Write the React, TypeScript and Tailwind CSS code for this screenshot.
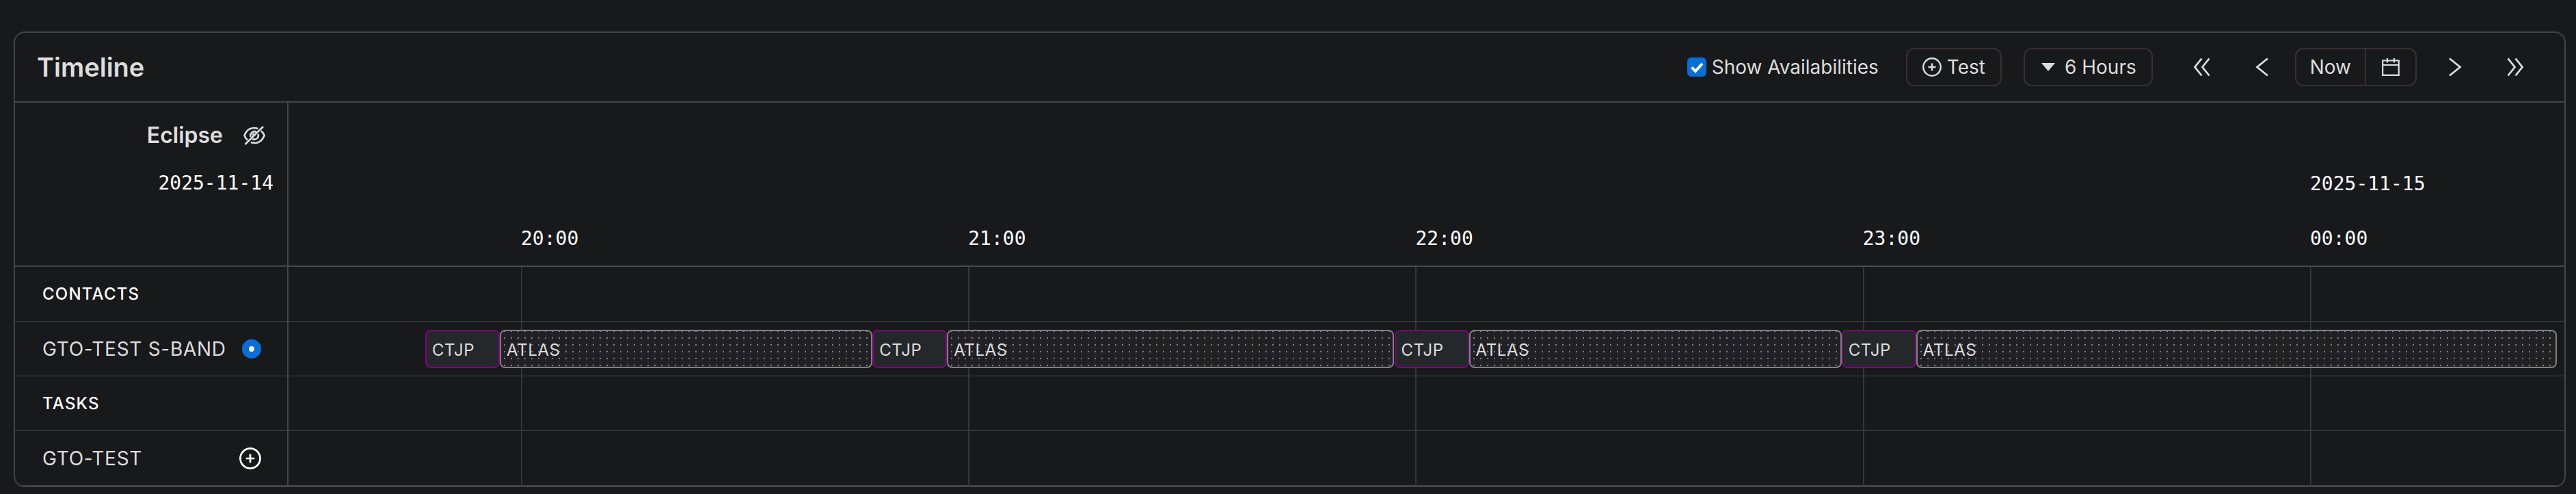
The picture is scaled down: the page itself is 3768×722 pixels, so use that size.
import { Fragment } from 'react'

const BORDER = 'border-[#444444]'

// Visible window: minutes since 2025-11-14 00:00
const START = 1168.82
const SPAN = 305.3

const pct = (minutes: number) => `${((minutes - START) / SPAN) * 100}%`
const width = (from: number, to: number) => `${((to - from) / SPAN) * 100}%`

const hours = [
  { at: 1200, label: '20:00' },
  { at: 1260, label: '21:00' },
  { at: 1320, label: '22:00' },
  { at: 1380, label: '23:00' },
  { at: 1440, label: '00:00', date: '2025-11-15' },
]

const contacts = [
  { name: 'CTJP', from: 1187.16, to: 1197.16 },
  { name: 'ATLAS', from: 1197.16, to: 1247.16 },
  { name: 'CTJP', from: 1247.16, to: 1257.16 },
  { name: 'ATLAS', from: 1257.16, to: 1317.16 },
  { name: 'CTJP', from: 1317.16, to: 1327.16 },
  { name: 'ATLAS', from: 1327.16, to: 1377.16 },
  { name: 'CTJP', from: 1377.16, to: 1387.16 },
  { name: 'ATLAS', from: 1387.16, to: 1473.07 },
]

function PlusCircle({ className }: { className: string }) {
  return (
    <svg viewBox="0 0 28 28" className={className} fill="none" stroke="currentColor" strokeWidth="2.4">
      <circle cx="14" cy="14" r="12.7" />
      <path d="M14 8.500v11M8.500 14h11" />
    </svg>
  )
}

function EyeOff() {
  return (
    <svg viewBox="0 0 32 28" className="h-7 w-8" fill="none" stroke="currentColor" strokeWidth="2.6">
      <path d="M21.500 4C12 1 5 5 1.500 14c1.200 3 2.600 5 4.600 6.800" />
      <path d="M26 7.200c2 1.800 3.600 4 4.700 6.800C27 23 20 27 11 24" />
      <path d="M19 9a5.800 5.800 0 0 0-8.300 7M13.200 19a5.800 5.800 0 0 0 8.300-7" />
      <path d="M15.800 11.500a2.500 2.500 0 0 0-2.200 2.200" />
      <path d="M2.500 27 29 1" />
    </svg>
  )
}

function Chevron({ double, right }: { double?: boolean; right?: boolean }) {
  return (
    <svg
      viewBox="0 0 26 28"
      className={right ? 'h-7 w-[26px] rotate-180' : 'h-7 w-[26px]'}
      fill="none"
      stroke="currentColor"
      strokeWidth="2.8"
    >
      {double ? <path d="M12.500 1.500 2.500 14l10 12.500M23.500 1.500 13.500 14l10 12.500" /> : <path d="M21 1.500 5.500 14 21 26.500" />}
    </svg>
  )
}

function Header() {
  return (
    <header className={`flex h-[102px] items-center border-b-2 ${BORDER} pr-7 pl-8`}>
      <h1 className="text-[38px] font-semibold">Timeline</h1>
      <div className="ml-auto flex items-center text-[28px]">
        <label className="mr-10 flex items-center gap-2">
          <span className="grid size-7">
            <input
              type="checkbox"
              defaultChecked
              className="col-start-1 row-start-1 size-7 appearance-none rounded-md bg-[#086fd9]"
            />
            <svg viewBox="0 0 28 28" className="pointer-events-none col-start-1 row-start-1 size-7" fill="none" stroke="#fff" strokeWidth="4">
              <path d="m6.500 14.500 5.500 5.500L22 9" />
            </svg>
          </span>
          Show Availabilities
        </label>
        <button className="mr-8 flex h-14 items-center gap-2 rounded-xl border-2 border-[#392f2e] px-[22px]">
          <PlusCircle className="size-7" />
          Test
        </button>
        <button className="flex h-14 items-center gap-3 rounded-xl border-2 border-[#392f2e] px-[22px]">
          <svg viewBox="0 0 24 24" className="size-6" fill="currentColor">
            <path d="M2 6h20L12 18z" />
          </svg>
          6 Hours
        </button>
        <button aria-label="Jump back" className="ml-7 flex h-14 w-[88px] items-center justify-center">
          <Chevron double />
        </button>
        <button aria-label="Step back" className="mr-1 flex h-14 w-[88px] items-center justify-center">
          <Chevron />
        </button>
        <div className="flex h-14 rounded-xl border-2 border-[#392f2e]">
          <button className="px-5">Now</button>
          <button aria-label="Pick a date" className="flex w-[74px] items-center justify-center border-l-2 border-[#392f2e]">
            <svg viewBox="0 0 28 28" className="size-7" fill="none" stroke="currentColor" strokeWidth="2.2">
              <path d="M2.200 4.500h23.600v21.400H2.200zM2.200 11h23.600M9 1v6.500M19 1v6.500" />
            </svg>
          </button>
        </div>
        <button aria-label="Step forward" className="ml-3 flex h-14 w-[88px] items-center justify-center">
          <Chevron right />
        </button>
        <button aria-label="Jump forward" className="flex h-14 w-[88px] items-center justify-center">
          <Chevron double right />
        </button>
      </div>
    </header>
  )
}

function Scale() {
  return (
    <div className="relative h-60 border-b-2 border-[#434a4f] font-['DejaVu_Sans_Mono',monospace] text-[28px] leading-8 text-white">
      {hours.map((hour) => (
        <Fragment key={hour.label}>
          {hour.date && (
            <span className="absolute top-[103px]" style={{ left: pct(hour.at) }}>
              {hour.date}
            </span>
          )}
          <span className="absolute bottom-[23px]" style={{ left: pct(hour.at) }}>
            {hour.label}
          </span>
        </Fragment>
      ))}
    </div>
  )
}

function Contact({ name, from, to }: { name: string; from: number; to: number }) {
  const look =
    name === 'CTJP'
      ? 'border-[#800080] bg-[#24282b]'
      : 'border-[#808080] bg-[#212121] bg-[conic-gradient(at_2px_2px,transparent_75%,#808080_0),linear-gradient(90deg,#252136_2px,transparent_2px)] bg-[size:10px_10px] bg-[position:4px_9px]'
  return (
    <button
      className={`absolute top-3 flex h-14 items-center overflow-hidden rounded-lg border-2 px-2 pt-1 text-2xl tracking-wide ${look}`}
      style={{ left: pct(from), width: width(from, to) }}
    >
      {name}
    </button>
  )
}

export default function App() {
  const row = `h-20 border-b ${BORDER}`
  return (
    <div className="min-h-screen bg-[#18191b] px-5 pt-[46px] pb-2.5 font-['Inter',sans-serif] text-[#dddddd]">
      <section className={`mr-[-5px] overflow-hidden rounded-2xl border-2 ${BORDER}`}>
        <Header />
        <div className="flex">
          <div className={`w-[400px] shrink-0 border-r-2 ${BORDER}`}>
            <div className={`h-60 border-b-2 ${BORDER} pt-7 pr-5`}>
              <div className="flex items-center justify-end gap-[30px] pr-3">
                <span className="text-[32px] leading-10 font-semibold">Eclipse</span>
                <button aria-label="Hide eclipse">
                  <EyeOff />
                </button>
              </div>
              <div className="mt-[34px] text-right font-['DejaVu_Sans_Mono',monospace] text-[28px] leading-8 text-white">2025-11-14</div>
            </div>
            <h2 className={`${row} flex items-center pl-10 text-2xl font-medium tracking-wider text-white`}>CONTACTS</h2>
            <div className={`${row} flex items-center justify-between pr-[38px] pl-10 text-[28px] tracking-wide`}>
              GTO-TEST S-BAND
              <input type="radio" defaultChecked aria-label="GTO-TEST S-BAND" className="size-7 appearance-none rounded-full border-[10px] border-[#086fd9] bg-white" />
            </div>
            <h2 className={`${row} flex items-center pl-10 text-2xl font-medium tracking-wider text-white`}>TASKS</h2>
            <div className={`${row} flex items-center justify-between pr-[38px] pl-10 text-[28px] tracking-wide`}>
              GTO-TEST
              <button aria-label="Add task" className="text-white">
                <PlusCircle className="size-8" />
              </button>
            </div>
          </div>
          <div className="min-w-0 flex-1">
            <Scale />
            <div className="relative">
              {hours.map((hour) => (
                <div key={hour.label} className="absolute inset-y-0 w-0.5 bg-[#373737]" style={{ left: pct(hour.at) }} />
              ))}
              <div className={row} />
              <div className={`${row} relative`}>
                {contacts.map((contact) => (
                  <Contact key={contact.from} {...contact} />
                ))}
              </div>
              <div className={row} />
              <div className={row} />
            </div>
          </div>
        </div>
      </section>
    </div>
  )
}
